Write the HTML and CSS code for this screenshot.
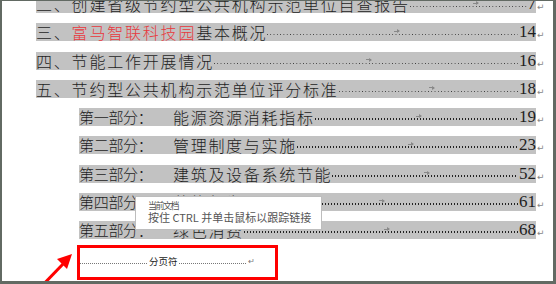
FILE: index.html
```html
<!DOCTYPE html>
<html lang="zh-CN">
<head>
    <meta charset="UTF-8">
    <title>目录 - 分页符</title>
    <link rel="stylesheet" href="styles.css">
</head>
<body>
    <div class="page">
        <div class="toc">
            <div class="row">
                <div class="hl">
                    <span class="title">二、创建省级节约型公共机构示范单位自查报告</span>
                    <span class="leader"></span>
                    <span class="num">7</span>
                    <i class="tab" style="left: 437px"></i>
                </div>
                <span class="pm">↵</span>
            </div>
            <div class="row">
                <div class="hl">
                    <span class="title">三、<span class="red">富马智联科技园</span>基本概况</span>
                    <span class="leader"></span>
                    <span class="num">14</span>
                    <i class="tab" style="left: 358px"></i>
                </div>
                <span class="pm">↵</span>
            </div>
            <div class="row">
                <div class="hl">
                    <span class="title">四、节能工作开展情况</span>
                    <span class="leader"></span>
                    <span class="num">16</span>
                    <i class="tab" style="left: 330px"></i>
                </div>
                <span class="pm">↵</span>
            </div>
            <div class="row">
                <div class="hl">
                    <span class="title">五、节约型公共机构示范单位评分标准</span>
                    <span class="leader"></span>
                    <span class="num">18</span>
                    <i class="tab" style="left: 393px"></i>
                </div>
                <span class="pm">↵</span>
            </div>
            <div class="row sub">
                <div class="hl">
                    <span class="part">第一部分：</span>
                    <span class="title">能源资源消耗指标</span>
                    <span class="leader"></span>
                    <span class="num">19</span>
                    <i class="tab" style="left: 337px"></i>
                </div>
                <span class="pm">↵</span>
            </div>
            <div class="row sub">
                <div class="hl">
                    <span class="part">第二部分：</span>
                    <span class="title">管理制度与实施</span>
                    <span class="leader"></span>
                    <span class="num">23</span>
                    <i class="tab" style="left: 329px"></i>
                </div>
                <span class="pm">↵</span>
            </div>
            <div class="row sub">
                <div class="hl">
                    <span class="part">第三部分：</span>
                    <span class="title">建筑及设备系统节能</span>
                    <span class="leader"></span>
                    <span class="num">52</span>
                    <i class="tab" style="left: 345px"></i>
                </div>
                <span class="pm">↵</span>
            </div>
            <div class="row sub">
                <div class="hl">
                    <span class="part">第四部分：</span>
                    <span class="title">节能行为</span>
                    <span class="leader"></span>
                    <span class="num">61</span>
                    <i class="tab" style="left: 300px"></i>
                </div>
                <span class="pm">↵</span>
            </div>
            <div class="row sub">
                <div class="hl">
                    <span class="part">第五部分：</span>
                    <span class="title">绿色消费</span>
                    <span class="leader"></span>
                    <span class="num">68</span>
                    <i class="tab" style="left: 305px"></i>
                </div>
                <span class="pm">↵</span>
            </div>
        </div>

        <!-- 分页符 -->
        <div class="break-box">
            <div class="break-line">
                <span class="break-dots"></span>
                <span class="break-text">分页符</span>
                <span class="break-dots"></span>
                <span class="break-pm">↵</span>
            </div>
        </div>

        <div class="tooltip">
            <div class="tip-title">当前文档</div>
            <div class="tip-text">按住 CTRL 并单击鼠标以跟踪链接</div>
        </div>

        <svg class="arrow" width="556" height="284" viewBox="0 0 556 284">
            <line x1="36" y1="292" x2="64" y2="263" stroke="#ff0000" stroke-width="3"/>
            <polygon points="72,254 57,259 67,269" fill="#ff0000"/>
        </svg>
    </div>
</body>
</html>
```

FILE: styles.css
```css
body {
    margin: 0;
    padding: 0;
    background: #fff;
}
.page {
    position: relative;
    width: 556px;
    height: 284px;
    box-sizing: border-box;
    border-style: solid;
    border-color: #626a63;
    border-width: 1px 3px 3px 2px;
    overflow: hidden;
    color: #1e1e1e;
    font-family: "Noto Sans CJK SC", "Liberation Serif", serif;
}
.toc {
    display: flex;
    flex-direction: column;
    gap: 10.25px;
    margin-top: -6px;
}
.row {
    display: flex;
    height: 18px;
    margin-left: 34px;
}
.row.sub {
    margin-left: 77px;
}
.hl {
    position: relative;
    flex: 1;
    display: flex;
    background-color: #c2c2c2;
    height: 18px;
    line-height: 18px;
}
.title {
    white-space: nowrap;
    font-size: 16px;
    font-weight: 300;
    letter-spacing: 1.8px;
}
.part {
    white-space: nowrap;
    font-size: 15px;
    font-weight: 300;
    letter-spacing: -0.3px;
    width: 94px;
}
.sub .title {
    letter-spacing: 1.7px;
}
.red {
    color: #e8383d;
}
.leader {
    flex: 1;
    background-image: linear-gradient(to right, #3a3a3a 1.2px, transparent 1.2px);
    background-size: 3.3px 1.3px;
    background-repeat: repeat-x;
    background-position: 0 11px;
    margin-right: 1px;
}
.sub .leader {
    background-image: linear-gradient(to right, #222 1.5px, transparent 1.5px);
    background-size: 3px 1.6px;
    background-position: 0 10px;
}
.num {
    font-family: "Liberation Serif", serif;
    font-size: 17px;
}
.tab {
    position: absolute;
    top: 6px;
    width: 6px;
    height: 4px;
    background: #c2c2c2;
}
.tab::before {
    content: "";
    position: absolute;
    left: 0;
    top: 1.5px;
    width: 5px;
    height: 1px;
    background: #888;
}
.tab::after {
    content: "";
    position: absolute;
    right: 0;
    top: 0;
    border-left: 3px solid #888;
    border-top: 2px solid transparent;
    border-bottom: 2px solid transparent;
}
.pm {
    width: 16px;
    padding-left: 1px;
    font-size: 9px;
    line-height: 9px;
    padding-top: 8px;
    color: #888;
    font-family: "DejaVu Sans", sans-serif;
}
.break-box {
    margin: 6px 0 0 75px;
    width: 201px;
    height: 35px;
    box-sizing: border-box;
    border: 3px solid #ff0000;
    padding: 6px 20px 0 0;
}
.break-line {
    display: flex;
    align-items: center;
    height: 14px;
}
.break-dots {
    flex: 1;
    height: 1px;
    margin-top: 4px;
    background-image: linear-gradient(to right, #777 1px, transparent 1px);
    background-size: 2px 1px;
}
.break-text {
    font-size: 9.5px;
    color: #222;
    padding: 0 2px;
    line-height: 14px;
}
.break-pm {
    font-size: 8px;
    color: #777;
    margin-left: 2px;
    font-family: "DejaVu Sans", sans-serif;
}
.tooltip {
    position: absolute;
    left: 133px;
    top: 195px;
    width: 187px;
    height: 34px;
    box-sizing: border-box;
    background: #fff;
    border: 1px solid #bdbdbd;
    padding: 3px 0 0 12px;
    color: #555;
}
.tip-title {
    font-size: 9px;
    line-height: 11px;
    letter-spacing: -1.5px;
}
.tip-text {
    font-size: 11px;
    line-height: 13px;
    white-space: nowrap;
}
.arrow {
    position: absolute;
    left: -2px;
    top: -1px;
}
```
